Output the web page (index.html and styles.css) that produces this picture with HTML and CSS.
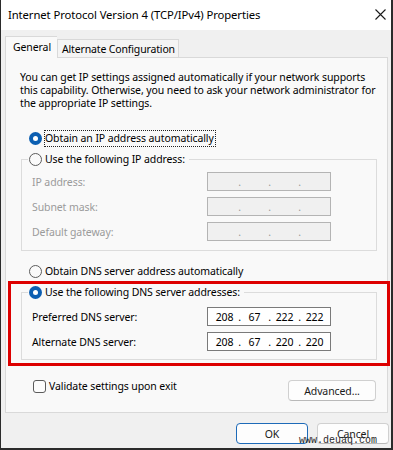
FILE: index.html
```html
<!DOCTYPE html>
<html lang="en">
<head>
	<meta charset="UTF-8">
	<title>Internet Protocol Version 4 (TCP/IPv4) Properties</title>
	<link rel="stylesheet" href="styles.css">
</head>
<body>
<div class="window">
	<div class="titlebar">
		<span class="title">Internet Protocol Version 4 (TCP/IPv4) Properties</span>
		<svg class="close" width="11" height="11" viewBox="0 0 11 11"><path d="M0.5 0.5 L10.5 10.5 M10.5 0.5 L0.5 10.5" stroke="#1a1a1a" stroke-width="1.1" fill="none"/></svg>
	</div>

	<div class="tabs">
		<div class="tab active">General</div>
		<div class="tab">Alternate Configuration</div>
	</div>

	<div class="panel">
		<p class="intro">You can get IP settings assigned automatically if your network supports this capability. Otherwise, you need to ask your network administrator for the appropriate IP settings.</p>

		<label class="option first"><span class="radio checked"></span><span class="focused">Obtain an IP address automatically</span></label>

		<fieldset class="group ip">
			<legend><label class="option"><span class="radio"></span>Use the following IP address:</label></legend>
			<div class="row disabled"><span>IP address:</span><div class="ipbox"><span></span><i>.</i><span></span><i>.</i><span></span><i>.</i><span></span></div></div>
			<div class="row disabled"><span>Subnet mask:</span><div class="ipbox"><span></span><i>.</i><span></span><i>.</i><span></span><i>.</i><span></span></div></div>
			<div class="row disabled"><span>Default gateway:</span><div class="ipbox"><span></span><i>.</i><span></span><i>.</i><span></span><i>.</i><span></span></div></div>
		</fieldset>

		<label class="option dns-auto"><span class="radio"></span>Obtain DNS server address automatically</label>

		<div class="highlight">
			<fieldset class="group dns">
				<legend><label class="option"><span class="radio checked"></span>Use the following DNS server addresses:</label></legend>
				<div class="row"><span>Preferred DNS server:</span><div class="ipbox"><span>208</span><i>.</i><span>67</span><i>.</i><span>222</span><i>.</i><span>222</span></div></div>
				<div class="row"><span>Alternate DNS server:</span><div class="ipbox"><span>208</span><i>.</i><span>67</span><i>.</i><span>220</span><i>.</i><span>220</span></div></div>
			</fieldset>
		</div>

		<div class="validate">
			<label class="check"><span class="box"></span>Validate settings upon exit</label>
			<button class="btn advanced">Advanced...</button>
		</div>
	</div>

	<div class="footer">
		<button class="btn default">OK</button>
		<button class="btn">Cancel</button>
		<span class="watermark">www.deuaq.com</span>
	</div>
</div>
</body>
</html>
```
FILE: styles.css
```css
* {
	box-sizing: border-box;
}
body {
	margin:0;
	font-family: "Noto Sans", "Liberation Sans", sans-serif;
	font-size:10.5px;
	letter-spacing:-0.1px;
	color:#000;
}

.window {
	width:393px;
	height:450px;
	display:flex;
	flex-direction:column;
	background:#f0f0f0;
	border-left:1px solid #2b2b2b;
	border-right:2px solid #2b2b2b;
	border-bottom:2px solid #2b2b2b;
}

.titlebar {
	height:30px;
	flex:none;
	display:flex;
	align-items:center;
	justify-content:space-between;
	padding:0 5px 2px 7px;
	background:#fff;
	font-size:11.3px;
}
.close {
	display:block;
}

/* tabs */
.tabs {
	display:flex;
	align-items:flex-end;
	height:27px;
	padding-left:4px;
}
.tab {
	height:18px;
	padding:0 3px 0 4px;
	display:flex;
	align-items:center;
	white-space:nowrap;
	letter-spacing:-0.15px;
	background:#f4f4f4;
	border:1px solid #d9d9d9;
	border-bottom:none;
}
.tab.active {
	position:relative;
	z-index:1;
	height:22px;
	width:52px;
	margin-bottom:-1px;
	padding-left:7px;
	padding-bottom:1px;
	letter-spacing:-0.1px;
	background:#f9f9f9;
	border-right:none;
}

.panel {
	height:356px;
	margin:0 3px 0 4px;
	padding:13px 10px 0 15px;
	background:#f9f9f9;
	border:1px solid #d9d9d9;
}
.intro {
	margin:0 0 0 -1px;
	line-height:13px;
}

/* radios and checkbox */
.option {
	display:flex;
	align-items:center;
	height:16px;
	white-space:nowrap;
}
.radio {
	width:13px;
	height:13px;
	flex:none;
	margin-right:3px;
	border:1px solid #5c5c5c;
	border-radius:50%;
	background:#fafafa;
}
.radio.checked {
	border:none;
	background:#0c5fb2;
	display:flex;
	align-items:center;
	justify-content:center;
}
.radio.checked::after {
	content:'';
	width:5px;
	height:5px;
	border-radius:50%;
	background:#fff;
}
.option.first {
	margin:20px 0 0 8px;
}
.focused {
	outline:1px dotted #222;
	outline-offset:0;
	padding:0 1px 1px 0;
	line-height:14px;
}
.option.dns-auto {
	margin:12px 0 0 8px;
}

/* group boxes */
.group {
	margin:0;
	min-width:0;
	border:1px solid #dcdcdc;
	padding:0 45px 9px 10px;
}
.group legend {
	margin-left:-4px;
	padding:0 4px 0 1px;
}
.group.ip {
	margin-top:5px;
}
.group.ip legend {
	margin-bottom:5px;
}
.group.dns legend {
	margin-bottom:7px;
}
.group.dns {
	padding-bottom:8px;
}

.row {
	display:flex;
	align-items:center;
	justify-content:space-between;
}
.row + .row {
	margin-top:6px;
}
.row.disabled {
	color:#9b9b9b;
}

.ipbox {
	width:124px;
	height:19px;
	display:grid;
	grid-template-columns:27px 3px 27px 3px 27px 3px 27px;
	align-items:center;
	padding-left:3px;
	background:#fff;
	border:1px solid #7a7a7a;
	color:#000;
	text-align:center;
}
.ipbox i {
	font-style:normal;
}
.disabled .ipbox {
	background:#f0f0f0;
	border-color:#b4b4b4;
	color:#9b9b9b;
}

.highlight {
	margin:2px -13px 0 -13px;
	padding:0 10px 3px 10px;
	border:3px solid #dd0000;
}

.validate {
	display:flex;
	justify-content:space-between;
	align-items:flex-start;
	margin-top:13px;
}
.check {
	display:flex;
	align-items:center;
	height:14px;
	margin-left:12px;
}
.check .box {
	width:13px;
	height:13px;
	margin-right:3px;
	border:1px solid #5c5c5c;
	border-radius:3px;
	background:#fdfdfd;
}

/* buttons */
.btn {
	height:21px;
	padding:0;
	font:inherit;
	letter-spacing:inherit;
	color:#1a1a1a;
	background:#fdfdfd;
	border:1px solid #d0d0d0;
	border-bottom-color:#b9b9b9;
	border-radius:4px;
}
.btn.advanced {
	width:88px;
	margin:1px 1px 0 0;
}

.footer {
	position:relative;
	display:flex;
	justify-content:flex-end;
	gap:9px;
	padding:10px 2px 0 0;
}
.footer .btn {
	width:72px;
}
.btn.default {
	border:1px solid #1d6ab8;
}
.watermark {
	position:absolute;
	right:14px;
	top:23px;
	font-family:"Liberation Mono", "DejaVu Sans Mono", monospace;
	font-size:10px;
	letter-spacing:0;
	line-height:10px;
	color:#2a2a2a;
}
```
